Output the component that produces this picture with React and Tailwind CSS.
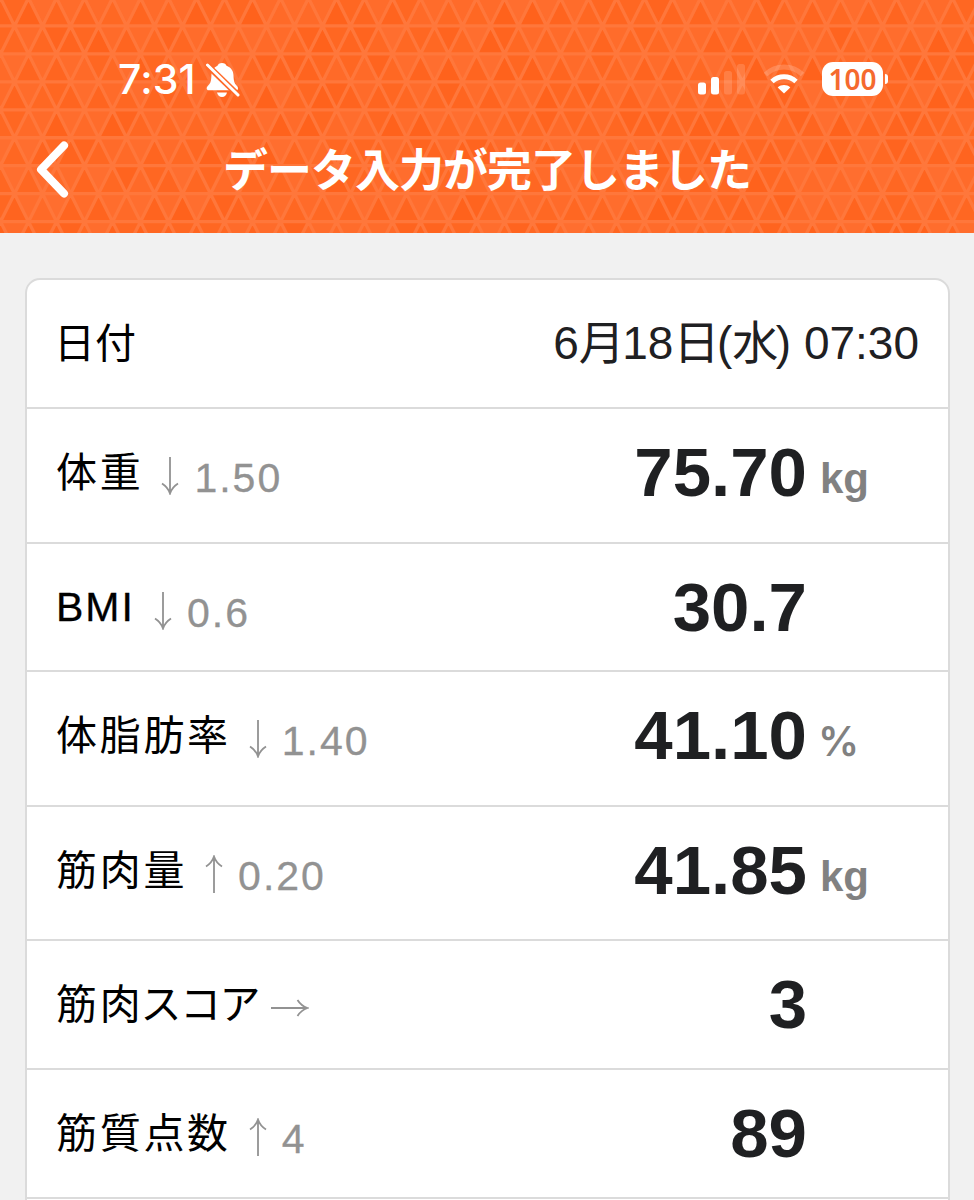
const ROWS = [
  { label: "体重", dir: "down", delta: "1.50", value: "75.70", unit: "kg", height: "h-[135px]" },
  { label: "BMI", dir: "down", delta: "0.6", value: "30.7", height: "h-[128px]" },
  { label: "体脂肪率", dir: "down", delta: "1.40", value: "41.10", unit: "%", height: "h-[135px]" },
  { label: "筋肉量", dir: "up", delta: "0.20", value: "41.85", unit: "kg", height: "h-[134px]" },
  { label: "筋肉", kana: "スコア", dir: "right", value: "3", height: "h-[129px]" },
  { label: "筋質点数", dir: "up", delta: "4", value: "89", height: "h-[129px]" },
];

const UP_FILLS = ["#ff6722", "#ff641f", "#ff6a28", "#ff621c", "#ff6520", "#ff6823"];
const DOWN_FILLS = ["#ff6d2d", "#ff6722", "#ff6b2a", "#ff6e2f", "#ff641f", "#ff6c2b"];

// cheap integer hash so neighbouring triangles get unrelated shades
const shade = (fills, n) => {
  let h = Math.imul(n + 11, 2654435761);
  h = Math.imul(h ^ (h >>> 15), 2246822519);
  return fills[((h ^ (h >>> 13)) >>> 0) % fills.length];
};

const CELLS = Array.from({ length: 9 * 37 }, (_, i) => {
  const row = Math.floor(i / 37);
  const col = i % 37;
  return { id: i, x: col * 28 + (row % 2 ? 14 : 0) - 27.5, y: row * 27.95 - 2 };
});

const TrianglePattern = () => (
  <svg className="absolute inset-0" width="974" height="233" viewBox="0 0 974 233" aria-hidden="true">
    {CELLS.map(({ id, x, y }) => (
      <g key={id}>
        <path d={`M${x} ${y}l14 28h-28z`} fill={shade(UP_FILLS, id * 2)} />
        <path d={`M${x} ${y}h28l-14 28z`} fill={shade(DOWN_FILLS, id * 2 + 1)} />
      </g>
    ))}
    {/* grid lines go over every fill */}
    <path
      d={CELLS.map(({ x, y }) => `M${x - 14} ${y + 28}L${x} ${y}L${x + 14} ${y + 28}M${x} ${y}h28`).join("")}
      fill="none"
      stroke="#ff773b"
      strokeWidth="3.3"
    />
  </svg>
);

const BellOff = () => (
  <svg width="34" height="36" viewBox="0 0 34 36" fill="none">
    <path
      d="M16 1c2.5 0 4 1.2 4.5 2.8 4.5 1.5 6.8 5 7 9.6.2 5.6.8 7.6 3 10 1 1.2 1.5 2 1.5 3 0 1.2-.8 1.9-2.2 1.9H3c-1.5 0-2.3-.8-2.3-1.900 0-1.300.7-2.100 1.900-3.400 2.200-2.400 2.600-4.400 2.800-9.600.2-4.600 2.400-8.100 6.100-9.600C12 2.200 13.500 1 16 1z"
      fill="#fff"
    />
    <path d="M11 30.500h10c-.5 2.700-2.400 4.500-5 4.500s-4.500-1.800-5-4.500z" fill="#fff" />
    <path d="M1 3l32 31" stroke="#ff6a29" strokeWidth="6" />
    <path d="M1.500 3l30.500 30" stroke="#fff" strokeWidth="3" strokeLinecap="round" />
  </svg>
);

const Signal = () => (
  <svg width="48" height="31" viewBox="0 0 48 31" fill="#fff">
    <rect x="0" y="18.5" width="8" height="12" rx="2.5" />
    <rect x="13" y="13" width="8" height="17.5" rx="2.5" />
    <rect x="26" y="7" width="8" height="23.5" rx="2.5" opacity=".15" />
    <rect x="39" y="0" width="8" height="30.5" rx="2.5" opacity=".15" />
  </svg>
);

const Wifi = () => (
  <svg width="42" height="30" viewBox="0 0 42 30" fill="none">
    <path d="M2.500 10.500c10.500-10 26.500-10 37 0" stroke="#fff" strokeOpacity=".18" strokeWidth="5" />
    <path d="M9 17.500c7-6.300 17-6.300 24 0" stroke="#fff" strokeWidth="5" />
    <path d="M21 29.500l-6.300-6c3.600-3.200 9-3.200 12.600 0z" fill="#fff" />
  </svg>
);

const Arrow = ({ dir }) =>
  dir === "right" ? (
    <svg width="38" height="18" viewBox="0 0 38 18" fill="none" stroke="#929292" strokeWidth="1.8">
      <path d="M0 9h36.500M26.500 1c2.500 4 5.500 6.500 10 8-4.500 1.500-7.500 4-10 8" />
    </svg>
  ) : (
    <svg
      width="18"
      height="38"
      viewBox="0 0 18 38"
      fill="none"
      stroke="#929292"
      strokeWidth="1.8"
      className={dir === "up" ? "rotate-180" : ""}
    >
      <path d="M9 0v36.500M1 26.500c4 2.500 6.500 5.500 8 10 1.500-4.500 4-7.500 8-10" />
    </svg>
  );

const Row = ({ label, kana, dir, delta, value, unit, height }) => (
  <div className={`flex items-start border-t-2 border-[#dbdbdb] pl-[29px] ${height}`}>
    <p
      className={`text-[41px] leading-none text-black ${
        label === "BMI"
          ? "w-[80px] pt-[43px] tracking-[2px] [-webkit-text-stroke:0.3px_black]"
          : "pt-[44px] tracking-[2.7px]"
      }`}
    >
      {label}
      {kana && <span className="-ml-[3px] tracking-[-1.5px]">{kana}</span>}
    </p>
    {dir === "right" ? (
      <div className="ml-[12px] pt-[58px]">
        <Arrow dir={dir} />
      </div>
    ) : (
      <div className="ml-[18px] pt-[48px]">
        <Arrow dir={dir} />
      </div>
    )}
    <p className="ml-[15px] pt-[49px] text-[41px] leading-none tracking-[2px] text-[#929292] [-webkit-text-stroke:0.3px_#929292]">
      {delta}
    </p>
    <p className="ml-auto pt-[29px] text-[69px] font-bold leading-none text-[#1f2022]">{value}</p>
    {unit === "%" ? (
      <p className="w-[141px] pl-[11px] pt-[49px] font-['Inter',sans-serif] text-[41px] font-semibold leading-none text-[#818181]">
        {unit}
      </p>
    ) : (
      <p className="w-[141px] pl-[13px] pt-[49px] text-[42px] font-bold leading-none text-[#818181]">{unit}</p>
    )}
  </div>
);

const App = () => (
  <div className="h-[1200px] w-[974px] overflow-hidden bg-[#f1f1f1] font-['Liberation_Sans','Noto_Sans_CJK_JP',sans-serif]">
    <header className="relative h-[233px] overflow-hidden text-white">
      <TrianglePattern />
      <div className="relative flex h-[124px] items-start pl-[118px] pt-[62px]">
        <span className="w-[79px] font-['Inter',sans-serif] text-[41px] font-medium leading-[35px] tracking-[0.1px]">7:31</span>
        <div className="ml-[9px]">
          <BellOff />
        </div>
        <div className="ml-auto mr-[86px] flex items-start">
          <div className="pt-[2px]">
            <Signal />
          </div>
          <div className="ml-[17px] pt-[2px]">
            <Wifi />
          </div>
          <div className="ml-[17px] flex h-[34px] w-[61px] items-center justify-center rounded-[11px] bg-white font-['Noto_Sans',sans-serif] text-[28px] font-semibold leading-none text-[#f56a2e]">
            100
          </div>
          <div className="ml-[2px] mt-[12px] h-[10px] w-[3px] rounded-r-full bg-white" />
        </div>
      </div>
      <div className="relative flex items-start pl-[36px]">
        <svg className="mt-[17px]" width="34" height="58" viewBox="0 0 34 58" fill="none" stroke="#fff" strokeWidth="8" strokeLinecap="round" strokeLinejoin="round">
          <path d="M28 4.500L5 28.500l23 24" />
        </svg>
        <h1 className="ml-[153px] mt-[25px] whitespace-nowrap text-[45px] font-bold leading-none tracking-[-1px]">
          データ入力が完了しました
        </h1>
      </div>
    </header>

    <main className="ml-[25px] mt-[45px] w-[925px] rounded-t-[15px] border-2 border-[#dbdbdb] bg-white">
      <div className="flex h-[127px] items-start justify-between pl-[27px] pr-[29px]">
        <p className="pt-[44px] text-[41px] leading-none text-black">日付</p>
        <p className="pt-[40px] text-[46px] leading-none text-[#1f2022]">
          6<span className="tracking-[-2.5px]">月</span>18<span className="tracking-[-2.5px]">日</span>(
          <span className="tracking-[-2.5px]">水</span>) 07:30
        </p>
      </div>
      {ROWS.map((row) => (
        <Row key={row.value} {...row} />
      ))}
      <div className="h-[10px] border-t-2 border-[#dbdbdb]" />
    </main>
  </div>
);

export default App;
